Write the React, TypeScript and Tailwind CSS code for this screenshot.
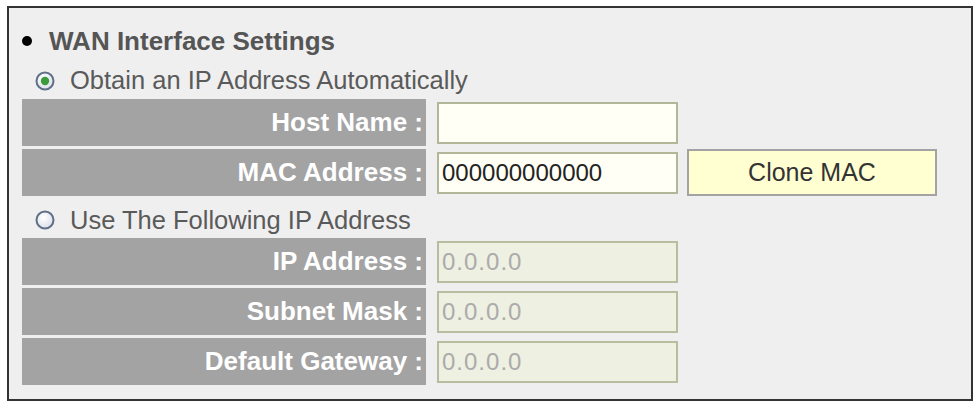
import React from 'react';

const font = { fontFamily: '"Liberation Sans", Arial, sans-serif' };

function Radio({ checked }: { checked?: boolean }) {
  return (
    <svg width="20" height="20" viewBox="0 0 20 20" className="shrink-0">
      <defs>
        <radialGradient id={checked ? 'rgOn' : 'rgOff'} cx="40%" cy="35%" r="70%">
          <stop offset="0%" stopColor="#ffffff" />
          <stop offset="100%" stopColor="#d9dfe7" />
        </radialGradient>
      </defs>
      <circle cx="10" cy="10" r="8.5" fill={`url(#${checked ? 'rgOn' : 'rgOff'})`} stroke="#5f6f88" strokeWidth="2" />
      {checked && <circle cx="10" cy="10" r="4.2" fill="#3c9c3c" />}
    </svg>
  );
}

function Row({ label, children }: { label: string; children?: React.ReactNode }) {
  return (
    <div className="flex h-[47px] items-center">
      <div className="flex h-full w-[404px] shrink-0 items-center justify-end bg-[#a3a3a3] pr-[3px] text-[26px] font-bold text-white">
        {label}
      </div>
      <div className="ml-[11px] flex h-full items-center gap-[9px]">{children}</div>
    </div>
  );
}

function Field({ value, disabled }: { value: string; disabled?: boolean }) {
  return (
    <div
      className={`flex h-[42px] w-[241px] items-center border-2 pl-[3px] text-[24px] ${
        disabled
          ? 'border-[#b9bd9f] bg-[#eef0e2] tracking-[1px] text-[#ababab]'
          : 'border-[#b3b79a] bg-[#fffff6] text-[#222]'
      }`}
    >
      {value}
    </div>
  );
}

export default function App() {
  return (
    <div className="h-[404px] w-[976px] bg-white pl-[7px] pt-[6px]" style={font}>
      <div className="h-[395px] w-[966px] border-2 border-[#333] bg-[#efefef] pl-[13px] pt-[18px]">
        <div className="flex h-[30px] items-center text-[26px] font-bold leading-[30px] text-[#555]">
          <span className="mr-[17px] h-[10px] w-[10px] rounded-full bg-black" />
          WAN Interface Settings
        </div>

        <div className="mt-[6px] flex h-[37px] items-center gap-[15px] pl-[13px] text-[25.5px] text-[#5a5a5a]">
          <Radio checked />
          Obtain an IP Address Automatically
        </div>

        <div className="flex flex-col gap-[3px]">
          <Row label="Host Name :">
            <Field value="" />
          </Row>
          <Row label="MAC Address :">
            <Field value="000000000000" />
            <button className="h-[47px] w-[250px] border-2 border-[#a3a3a3] bg-[#ffffd2] text-[25px] text-[#333]">
              Clone MAC
            </button>
          </Row>
        </div>

        <div className="flex h-[42px] items-center gap-[15px] pl-[13px] pt-[6px] text-[25.5px] text-[#5a5a5a]">
          <Radio />
          Use The Following IP Address
        </div>

        <div className="flex flex-col gap-[3px]">
          <Row label="IP Address :">
            <Field value="0.0.0.0" disabled />
          </Row>
          <Row label="Subnet Mask :">
            <Field value="0.0.0.0" disabled />
          </Row>
          <Row label="Default Gateway :">
            <Field value="0.0.0.0" disabled />
          </Row>
        </div>
      </div>
    </div>
  );
}
